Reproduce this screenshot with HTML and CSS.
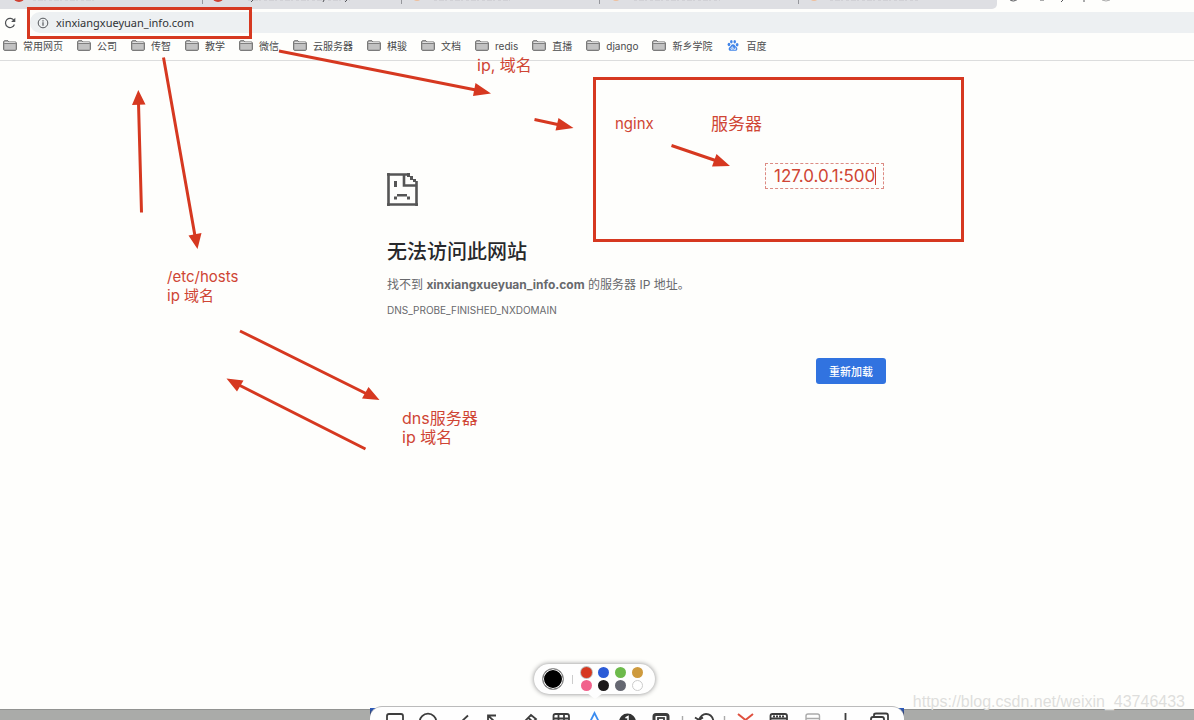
FILE: index.html
```html
<!DOCTYPE html>
<html lang="zh-CN">
<head>
<meta charset="utf-8">
<meta name="viewport" content="width=device-width, initial-scale=1">
<title>xinxiangxueyuan_info.com</title>
<link rel="stylesheet" href="styles.css">
</head>
<body>
<svg class="defs" aria-hidden="true">
  <symbol id="folder" viewBox="0 0 14 11">
    <path d="M.7 9.5V1.8Q.7.8 1.7.8H5L6.2 2H12.3Q13.3 2 13.3 3V9.5Q13.3 10.3 12.5 10.3H1.5Q.7 10.3.7 9.5Z" fill="#c2c2c2" stroke="#5e5e5e"/>
    <path d="M1.2 3.4H12.8" stroke="#777"/>
    <path d="M1.5 2.4H12.5" stroke="#f2f2f2" stroke-width=".8"/>
  </symbol>
</svg>
<header class="browser">
  <div class="tabs" aria-hidden="true">
    <svg width="1194" height="9" viewBox="0 0 1194 9">
      <g fill="#cf4132"><circle cx="19" cy="-4" r="6"/><circle cx="218" cy="-4" r="6"/></g>
      <g fill="#efbf9b"><circle cx="417" cy="-3" r="4"/><circle cx="616" cy="-3" r="4"/><circle cx="814" cy="-3" r="4"/></g>
      <path d="M202.500 0V4M401.500 0V4M599.500 0V4M798.500 0V4" stroke="#96979c"/>
      <path d="M33 0H97M248 0H350M434 0H510M634 0H720M830 0H918" stroke="#c3c4c9" stroke-dasharray="3 2 5 1 2 3"/>
      <path d="M253 0l-2 2M324 0l-1 2M347 0l-2 2" stroke="#55565a"/>
      <g fill="none" stroke="#55565a"><path d="M1009 -1Q1013 3 1018-1M1040 0h4M1063 0l-2 2M1084 0v2"/><path d="M1102 0Q1106 2 1110 0" stroke="#aaa"/></g>
    </svg>
  </div>
  <div class="toolbar">
    <button class="reload" aria-label="重新加载此页">
      <svg width="14" height="14" viewBox="0 0 14 14"><path d="M11 4.500A4.600 4.600 0 1 0 11.400 8.500" fill="none" stroke="#4e5053" stroke-width="1.200"/><path d="M12.300 1.800V6H8.100Z" fill="#4e5053"/></svg>
    </button>
    <label class="address">
      <svg width="12" height="12" viewBox="0 0 12 12" aria-hidden="true"><circle cx="6" cy="6" r="4.800" fill="none" stroke="#55585c"/><path d="M6 5.300V8.700M6 3.200V4.400" stroke="#55585c" stroke-width="1.200"/></svg>
      <input type="text" value="xinxiangxueyuan_info.com" aria-label="网址">
    </label>
  </div>
  <nav class="bookmarks" aria-label="书签">
    <a href="#"><svg><use href="#folder"/></svg>常用网页</a>
    <a href="#"><svg><use href="#folder"/></svg>公司</a>
    <a href="#"><svg><use href="#folder"/></svg>传智</a>
    <a href="#"><svg><use href="#folder"/></svg>教学</a>
    <a href="#"><svg><use href="#folder"/></svg>微信</a>
    <a href="#"><svg><use href="#folder"/></svg>云服务器</a>
    <a href="#"><svg><use href="#folder"/></svg>棋骏</a>
    <a href="#"><svg><use href="#folder"/></svg>文档</a>
    <a href="#"><svg><use href="#folder"/></svg>redis</a>
    <a href="#"><svg><use href="#folder"/></svg>直播</a>
    <a href="#"><svg><use href="#folder"/></svg>django</a>
    <a href="#"><svg><use href="#folder"/></svg>新乡学院</a>
    <a href="#"><svg viewBox="0 0 14 12"><g fill="#4285e8"><ellipse cx="2.600" cy="5" rx="1.500" ry="1.900"/><ellipse cx="5.200" cy="2" rx="1.400" ry="1.900"/><ellipse cx="8.900" cy="2" rx="1.400" ry="1.900"/><ellipse cx="11.500" cy="5.200" rx="1.500" ry="1.900"/><path d="M7 4.600C9 4.600 9.200 6.500 10.700 7.600C12.700 9.200 11.700 12 9.500 11.800H4.500C2.300 12 1.400 9.200 3.400 7.600C4.900 6.500 5 4.600 7 4.600Z"/></g><path d="M6.300 7V10.300H5Q4 9.500 5 8.600H6M7.800 8.300V10.300H9.800V8.300" fill="none" stroke="#fff" stroke-width=".8"/></svg>百度</a>
  </nav>
</header>

<main class="error">
  <svg class="sad" width="31" height="34" viewBox="0 0 31 34" aria-hidden="true">
    <path d="M0 1.500H20M1.500 0V33M0 31.500H31M29.500 33V8M17 1V12.500H30" fill="none" stroke="#555" stroke-width="2.600"/>
    <path d="M20 0h3v3h3v3h3v3h-3V7h-3V4h-3ZM7 8h3v6H7ZM10 21h10v2.500H10ZM7 23.500h3V26.500H7ZM20 23.500h3V26.500h-3Z" fill="#555"/>
  </svg>
  <h1>无法访问此网站</h1>
  <p class="reason">找不到 <strong>xinxiangxueyuan_info.com</strong> 的服务器 IP 地址。</p>
  <p class="code">DNS_PROBE_FINISHED_NXDOMAIN</p>
  <div class="actions"><button class="retry">重新加载</button></div>
</main>

<footer class="desktop"></footer>

<div class="canvas">
  <svg class="ink" width="1194" height="720" viewBox="0 0 1194 720" aria-hidden="true">
    <g fill="none" stroke="#d63820" stroke-width="3">
      <rect x="28.500" y="8.500" width="222" height="29"/>
      <rect x="594.500" y="78.500" width="368" height="162"/>
      <path d="M141.500 212.500 138.500 103M163.500 57.500 195 236M279 51 476 90M534.500 119.500 560 125M671.500 145.500 717 161M240 331 367 394M365.500 449 239 385"/>
    </g>
    <g fill="#d63820"><path d="M138.300 90 145.500 104.500 132 105ZM197.500 249 188.500 235.500 201.500 233ZM491 93.500 473 96 475.500 83ZM573.500 128 555.500 130.500 558.500 118ZM730 166 712 166.500 716.500 154ZM379.500 400 362 398.500 368.500 387ZM226.500 378.500 243.500 380.500 237 391.500Z"/></g>
  </svg>
  <p class="note note-ip">ip, 域名</p>
  <p class="note note-nginx">nginx</p>
  <p class="note note-server">服务器</p>
  <p class="note note-hosts">/etc/hosts<br>ip 域名</p>
  <p class="note note-dns">dns服务器<br>ip 域名</p>
  <input class="edit" type="text" value="127.0.0.1:500" aria-label="标注文字">
  <i class="caret"></i>
</div>

<div class="palette" role="group" aria-label="颜色">
  <button class="current" aria-label="当前颜色"></button>
  <i class="rule"></i>
  <div class="swatches">
    <button class="dot red" aria-label="红"></button><button class="dot blue" aria-label="蓝"></button><button class="dot green" aria-label="绿"></button><button class="dot gold" aria-label="金"></button>
    <button class="dot pink" aria-label="粉"></button><button class="dot black" aria-label="黑"></button><button class="dot gray" aria-label="灰"></button><button class="dot white" aria-label="白"></button>
  </div>
</div>

<div class="dock">
  <div class="tools">
  <svg width="534" height="14" viewBox="370 707 534 14" role="img" aria-label="标注工具">
    <g fill="none" stroke="#3d3d3d" stroke-width="1.800">
      <rect x="387" y="714" width="16" height="16" rx="2"/>
      <circle cx="428" cy="722" r="8.300"/>
      <path d="M461 722 468 715.500M488 720V715.500H496M488.500 716 494 721"/>
      <path d="M524 722 531 715 536 719 533 722M528 717.500 533 722"/>
      <rect x="553.500" y="714" width="15.500" height="15" rx="2"/><path d="M558.500 714V722M564 714V722M553 718.500H569"/>
      <rect x="654" y="714.500" width="14" height="14" rx="2" stroke-width="3"/><rect x="658" y="718" width="6" height="7"/>
      <path d="M698 722Q701 714 706 714Q712 714 713.500 721M695 717.500 699 720 703 717.500"/>
      <rect x="770.500" y="714" width="16.500" height="12" rx="2"/><path d="M770 718.500H787"/><path d="M773 716.500H785" stroke-dasharray="2 1"/>
      <path d="M845.500 713V722"/>
      <path d="M874 716V715Q874 713.500 876 713.500H886Q888 713.500 888 715.500V722M871 722V719Q871 717 873 717H882Q884 717 884 719V722"/>
    </g>
    <g fill="none" stroke="#aaa" stroke-width="1.400"><rect x="806" y="714" width="13.500" height="12" rx="2"/><path d="M806 718.500H820M682.500 716V722M724.500 716V722"/></g>
    <path d="M589 724 594.500 713 600 724" fill="none" stroke="#3a8cf0" stroke-width="1.800"/>
    <circle cx="627.500" cy="722" r="8.500" fill="#333"/><path d="M625.500 718 628 716.500V722" fill="none" stroke="#fff" stroke-width="1.500"/>
    <path d="M738 714 753 726M753 714 738 726" stroke="#df503f" stroke-width="2"/>
  </svg>
  </div>
</div>
<p class="watermark">https://blog.csdn.net/weixin_43746433</p>
</body>
</html>
```
FILE: styles.css
```css
* { box-sizing: border-box; }
body {
  margin: 0;
  min-height: 100vh;
  display: flex;
  flex-direction: column;
  position: relative;
  overflow: hidden;
  background: #fefefc;
  color: #4a4b4d;
  font-family: Inter, "Noto Sans CJK SC", sans-serif;
}
h1, p { margin: 0; }
button { border: 0; padding: 0; font: inherit; }
.defs { position: absolute; width: 0; height: 0; }

.tabs {
  height: 9px;
  margin-right: 197px;
  background: #dedfe3;
  border-bottom-right-radius: 5px;
}
.tabs svg { display: block; }
.toolbar { display: flex; align-items: center; height: 24px; padding-top: 3px; }
.reload { flex: none; width: 30px; height: 21px; padding-left: 3px; background: none; text-align: left; }
.reload svg { display: block; }
.address {
  flex: 1;
  display: flex;
  align-items: center;
  gap: 7px;
  height: 21px;
  padding-left: 7px;
  background: #edf0f2;
  border-radius: 10px 0 0 10px;
}
.address input {
  flex: 1;
  border: 0;
  padding: 0;
  background: none;
  color: #303235;
  font: 11px "Noto Sans", sans-serif;
}
.bookmarks {
  display: flex;
  align-items: center;
  gap: 14px;
  height: 28px;
  padding: 0 0 2px 3px;
  border-bottom: 1px solid #dcdddd;
}
.bookmarks a {
  display: flex;
  align-items: center;
  gap: 6px;
  color: #4a4b4d;
  font-size: 10px;
  line-height: 14px;
  text-decoration: none;
  white-space: nowrap;
}
.bookmarks svg { width: 14px; height: 11px; }

.error { flex: 1; width: 886px; max-width: 100%; padding: 112px 0 0 387px; }
.sad { display: block; }
.error h1 { margin-top: 30px; color: #27282b; font-size: 20px; line-height: 30px; font-weight: 500; }
.reason { margin-top: 9px; color: #68696c; font-size: 12px; line-height: 18px; }
.reason strong { font-weight: 700; }
.code { margin-top: 9px; color: #68696c; font-size: 10px; line-height: 14px; }
.actions { display: flex; justify-content: flex-end; margin-top: 41px; }
.retry {
  width: 70px;
  height: 26px;
  border-radius: 3px;
  background: #3173e0;
  color: #fff;
  font-size: 11px;
  font-weight: 500;
}
.desktop { height: 11px; background: #aaaba9; border-top: 1px solid #929391; }

.canvas { position: absolute; inset: 0; pointer-events: none; }
.ink { position: absolute; left: 0; top: 0; }
.note { position: absolute; color: #cf4534; font-size: 16px; line-height: 19px; white-space: nowrap; }
.note-ip { left: 477px; top: 56px; }
.note-nginx { left: 615px; top: 114px; font-size: 15px; }
.note-server { left: 711px; top: 115px; font-size: 17px; }
.note-hosts { left: 167px; top: 267px; font-size: 15px; }
.note-dns { left: 402px; top: 409px; }
.edit {
  position: absolute;
  left: 765px;
  top: 163px;
  width: 119px;
  height: 26px;
  padding: 0 0 0 8px;
  border: 1px dashed #dc8b83;
  background: none;
  color: #cf4534;
  font: 17px Inter, sans-serif;
}
.caret { position: absolute; left: 875px; top: 167px; width: 1px; height: 18px; background: #cf4534; }

.palette {
  position: absolute;
  left: 534px;
  bottom: 26px;
  display: flex;
  align-items: center;
  width: 121px;
  height: 30px;
  padding-left: 8px;
  border-radius: 15px;
  background: #fefefe;
  box-shadow: 0 0 5px #888;
}
.palette::after {
  content: "";
  position: absolute;
  left: 53px;
  top: 29px;
  border: 8px solid transparent;
  border-top: 6px solid #fefefe;
  border-bottom: 0;
}
.current { width: 22px; height: 22px; border: 1px solid #999; border-radius: 50%; background: #000; box-shadow: inset 0 0 0 1px #fff; }
.rule { width: 1px; height: 9px; margin: 0 8px; background: #ccc; }
.swatches { display: grid; grid-template-columns: repeat(4, 11px); gap: 2px 6px; }
.dot { width: 11px; height: 11px; border-radius: 50%; }
.red { background: #d63820; box-shadow: 0 0 0 1px #bbb; }
.blue { background: #2b5bd7; }
.green { background: #6dba4b; }
.gold { background: #ce9a3d; }
.pink { background: #f1628c; }
.black { background: #1b1819; }
.gray { background: #656771; }
.white { background: #fff; border: 1px solid #ccc; }

.dock {
  position: absolute;
  left: 370px;
  bottom: 0;
  width: 534px;
  height: 14px;
  overflow: hidden;
  background: linear-gradient(#fefefc 2px, #2c5dc0 2px, #35406b 8px);
}
.tools {
  overflow: hidden;
  background: #fefefe;
  border-top: 1px solid #bbb;
  border-radius: 12px 12px 0 0;
}
.tools svg { display: block; }
.watermark {
  position: absolute;
  right: 9px;
  bottom: 9px;
  color: #dededc;
  font: 16px/18px "Liberation Sans", Arial, sans-serif;
}
```
